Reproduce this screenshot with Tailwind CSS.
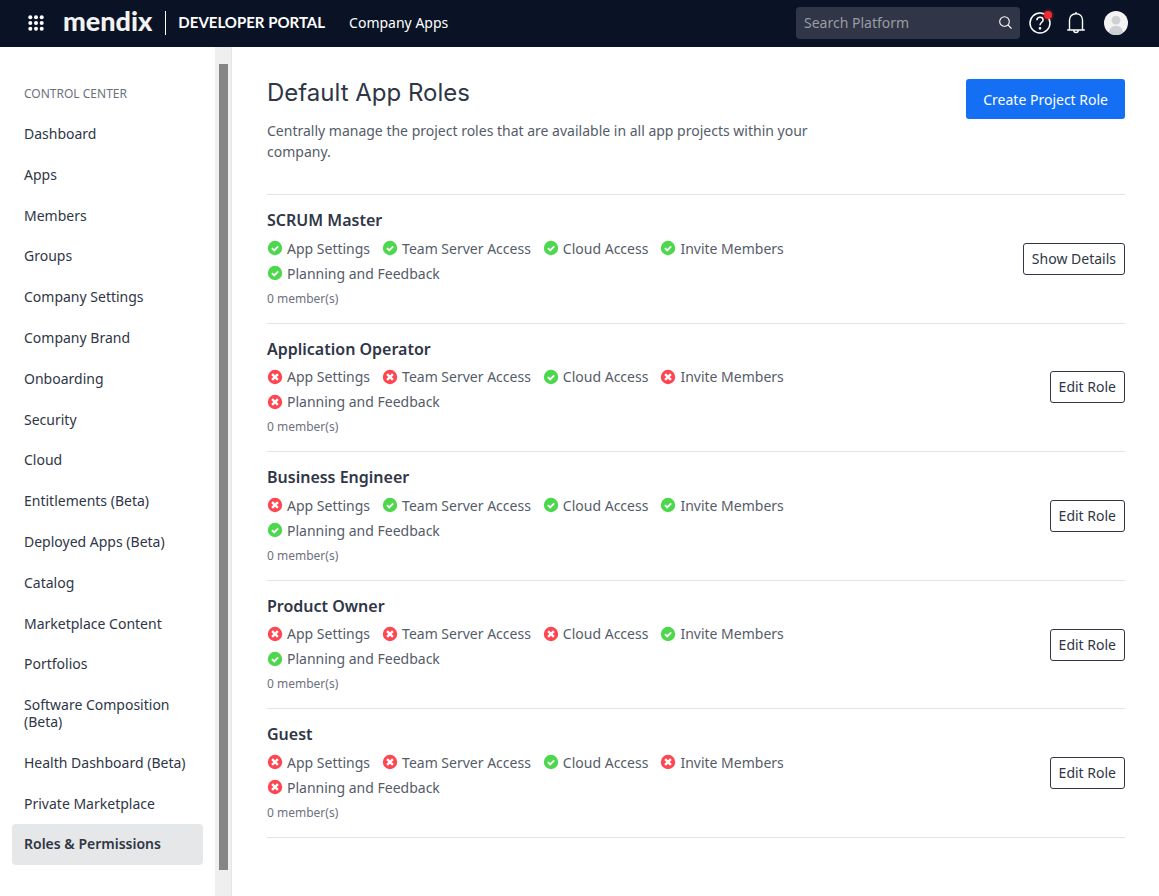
<!DOCTYPE html>
<html lang="en">
<head>
<meta charset="utf-8">
<meta name="viewport" content="width=device-width, initial-scale=1">
<title>Default App Roles</title>
<script src="https://cdn.jsdelivr.net/npm/@tailwindcss/browser@4"></script>
</head>
<body class="flex min-h-screen flex-col bg-white font-['Noto_Sans',sans-serif] text-sm text-[#2f3646]">
<svg class="hidden" aria-hidden="true">
  <symbol id="yes" viewBox="0 0 16 16"><circle cx="8" cy="8" r="7.2" fill="#4cd74c"/><path d="M4.9 8.1 7.2 10.3 11.2 6.3" fill="none" stroke="#fff" stroke-width="1.9"/></symbol>
  <symbol id="no" viewBox="0 0 16 16"><circle cx="8" cy="8" r="7.2" fill="#ff4550"/><path d="M5.1 5.1 10.9 10.9M10.9 5.1 5.1 10.9" fill="none" stroke="#fff" stroke-width="2.4"/></symbol>
</svg>

<header class="flex h-[47px] shrink-0 items-center bg-[#0a1325] pr-[31px] pb-0.5 pl-7 text-white">
  <button type="button" aria-label="App switcher" class="mr-[19px]">
    <svg class="size-4" viewBox="0 0 16 16" fill="#fff"><circle cx="2.3" cy="2.3" r="2"/><circle cx="8" cy="2.3" r="2"/><circle cx="13.7" cy="2.3" r="2"/><circle cx="2.3" cy="8" r="2"/><circle cx="8" cy="8" r="2"/><circle cx="13.7" cy="8" r="2"/><circle cx="2.3" cy="13.7" r="2"/><circle cx="8" cy="13.7" r="2"/><circle cx="13.7" cy="13.7" r="2"/></svg>
  </button>
  <a href="#" class="pb-1 font-[Lato,sans-serif] text-[27px] leading-8 font-black text-[#f2f2f2]">mendix</a>
  <div class="ml-[13px] h-6 w-px bg-white"></div>
  <a href="#" class="ml-3 font-[Lato,sans-serif] text-[15px] font-bold">DEVELOPER PORTAL</a>
  <a href="#" class="ml-6">Company Apps</a>
  <div class="ml-auto flex h-8 w-56 items-center rounded-sm bg-[#303647] pr-2 pl-2">
    <input type="search" aria-label="Search Platform" placeholder="Search Platform" class="min-w-0 flex-1 bg-transparent outline-none placeholder:text-[#9a9ca4]">
    <svg class="size-[13px]" viewBox="0 0 13 13" fill="none" stroke="#fff" stroke-width="1.1"><circle cx="5.5" cy="5.5" r="4.8"/><path d="m9 9 3.6 3.6"/></svg>
  </div>
  <button type="button" aria-label="Help" class="relative ml-2">
    <svg class="size-6" viewBox="0 0 24 24" fill="none" stroke="#fff" stroke-width="1.5"><circle cx="12" cy="12" r="10"/><path d="M8.9 9.2C9 7.3 10.2 6.2 12 6.2s3.1 1.1 3.1 2.7c0 2.3-3.1 2.5-3.1 5.3"/><circle cx="12" cy="17.3" r=".6" fill="#fff"/></svg>
    <span class="absolute top-0 right-0 size-2 rounded-full bg-[#ee2b30] ring-2 ring-[#ee2b30]/20"></span>
  </button>
  <button type="button" aria-label="Notifications" class="ml-3">
    <svg class="size-6" viewBox="0 0 24 24" fill="none" stroke="#fff" stroke-width="1.4"><path d="M3.2 19h17.6M5.5 18.8V9.2c0-3.9 2.6-6.5 6.5-6.5s6.5 2.6 6.5 6.5v9.6M12 1v2M9.7 19c0 3.4 4.6 3.4 4.6 0"/></svg>
  </button>
  <button type="button" aria-label="Account" class="ml-4">
    <svg class="size-6" viewBox="0 0 24 24"><defs><clipPath id="av"><circle cx="12" cy="12" r="12"/></clipPath></defs><g clip-path="url(#av)"><path fill="#f3f3f4" d="M0 0h24v24H0z"/><circle cx="12" cy="9.2" r="4.4" fill="#ced0d3"/><circle cx="12" cy="22" r="7.3" fill="#ced0d3"/></g></svg>
  </button>
</header>

<div class="flex flex-1">
  <aside class="flex w-[232px] shrink-0 border-r border-[#e5e5e5]">
    <nav class="flex-1 px-3 pt-[39px]" aria-label="Control Center">
      <h2 class="mb-3 px-3 text-xs leading-4 text-[#6c717e]">CONTROL CENTER</h2>
      <ul id="menu" class="leading-[1.2]"></ul>
    </nav>
    <div class="flex w-4 flex-col bg-[#efefef] px-1 pt-[17px] pb-[26px]"><div class="mr-[-1px] flex-1 bg-[#858585]"></div></div>
  </aside>

  <main class="min-w-0 flex-1 pt-8 pr-[34px] pl-[35px]">
    <div class="flex items-start justify-between pb-8">
      <div class="max-w-[560px]">
        <h1 class="mb-[13px] font-[Inter,sans-serif] text-2xl leading-7">Default App Roles</h1>
        <p class="leading-[21px] text-[#555c69]">Centrally manage the project roles that are available in all app projects within your company.</p>
      </div>
      <button type="button" class="h-10 rounded-[3px] bg-[#146ff4] px-[17px] pt-0.5 text-white">Create Project Role</button>
    </div>
    <ul id="roles" class="border-t border-[#e2e3e5]"></ul>
  </main>
</div>

<script>
const menu = ['Dashboard','Apps','Members','Groups','Company Settings','Company Brand','Onboarding','Security','Cloud','Entitlements (Beta)','Deployed Apps (Beta)','Catalog','Marketplace Content','Portfolios','Software Composition (Beta)','Health Dashboard (Beta)','Private Marketplace','Roles &amp; Permissions'];
document.getElementById('menu').innerHTML = menu.map((name, i) =>
  `<li><a href="#" class="block rounded-sm p-3 ${i === menu.length - 1 ? 'bg-[#e6e7e8] font-semibold' : ''}">${name}</a></li>`).join('');

const permissions = ['App Settings','Team Server Access','Cloud Access','Invite Members','Planning and Feedback'];
const roles = [
  ['SCRUM Master', [1,1,1,1,1], 'Show Details'],
  ['Application Operator', [0,0,1,0,0], 'Edit Role'],
  ['Business Engineer', [0,1,1,1,1], 'Edit Role'],
  ['Product Owner', [0,0,0,1,1], 'Edit Role'],
  ['Guest', [0,0,1,0,0], 'Edit Role'],
];
document.getElementById('roles').innerHTML = roles.map(([name, granted, action]) => `
  <li class="flex items-center justify-between border-b border-[#e2e3e5] py-[15px]">
    <div class="max-w-[560px]">
      <h3 class="mb-1 text-base leading-[1.35] font-semibold">${name}</h3>
      <ul class="flex flex-wrap gap-x-3 leading-[25px] text-[#555c69]">${permissions.map((p, i) => `
        <li class="flex items-center gap-1"><svg class="size-4" role="img" aria-label="${granted[i] ? 'Allowed' : 'Denied'}"><use href="${granted[i] ? '#yes' : '#no'}"/></svg>${p}</li>`).join('')}
      </ul>
      <p class="mt-1 text-xs leading-[18px] text-[#6c717e]">0 member(s)</p>
    </div>
    <button type="button" class="h-8 rounded-[3px] border border-[#2f3646] px-2">${action}</button>
  </li>`).join('');
</script>
</body>
</html>
